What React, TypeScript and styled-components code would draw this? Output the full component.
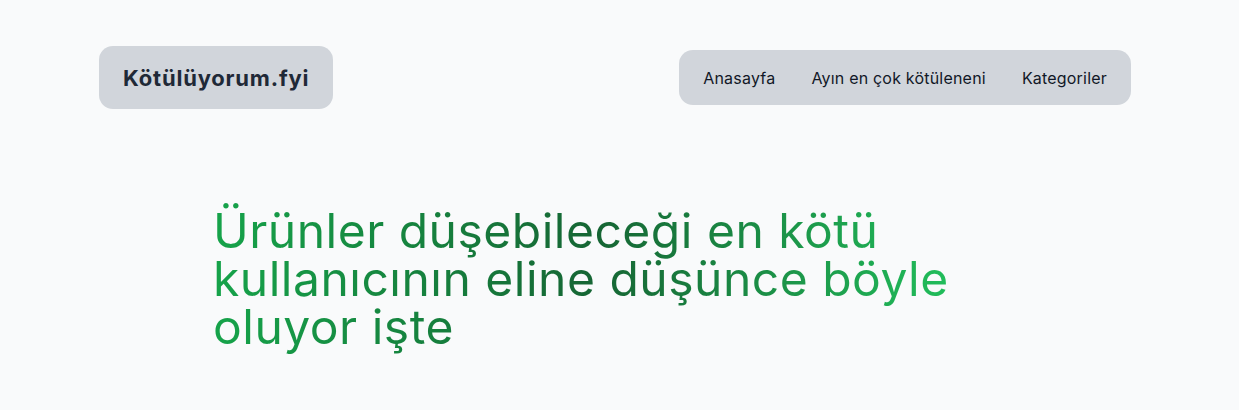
import React from "react";
import styled, { createGlobalStyle } from "styled-components";

const GlobalStyle = createGlobalStyle`
  body {
    margin: 0;
    background: #f9fafb;
    font-family: "Inter", "Liberation Sans", sans-serif;
  }
`;

const Header = styled.header`
  display: flex;
  justify-content: space-between;
  align-items: center;
  padding: 46px 108px 0 99px;
`;

const Logo = styled.a`
  display: flex;
  align-items: center;
  height: 63px;
  padding: 0 24px;
  background: #d1d5db;
  border-radius: 14px;
  font-size: 22px;
  font-weight: 700;
  letter-spacing: 0.8px;
  color: #1f2937;
  text-decoration: none;
`;

const Nav = styled.nav`
  display: flex;
  align-items: center;
  gap: 36px;
  height: 55px;
  padding: 0 24px;
  background: #d1d5db;
  border-radius: 14px;
`;

const NavLink = styled.a`
  font-size: 16px;
  letter-spacing: 0.2px;
  color: #111827;
  text-decoration: none;
`;

const Hero = styled.section`
  padding: 90px 0 0 213px;
`;

const Title = styled.h1`
  margin: 0;
  padding: 8px 0 12px;
  max-width: 768px;
  font-size: 48px;
  font-weight: 400;
  line-height: 48px;
  letter-spacing: 0.5px;
  background: linear-gradient(to right, #16a34a, #166534 50%, #22c55e);
  -webkit-background-clip: text;
  background-clip: text;
  color: transparent;
`;

export default function App() {
  return (
    <>
      <GlobalStyle />
      <Header>
        <Logo href="#">Kötülüyorum.fyi</Logo>
        <Nav>
          <NavLink href="#">Anasayfa</NavLink>
          <NavLink href="#">Ayın en çok kötüleneni</NavLink>
          <NavLink href="#">Kategoriler</NavLink>
        </Nav>
      </Header>
      <Hero>
        <Title>
          Ürünler düşebileceği en kötü kullanıcının eline düşünce böyle oluyor
          işte
        </Title>
      </Hero>
    </>
  );
}
